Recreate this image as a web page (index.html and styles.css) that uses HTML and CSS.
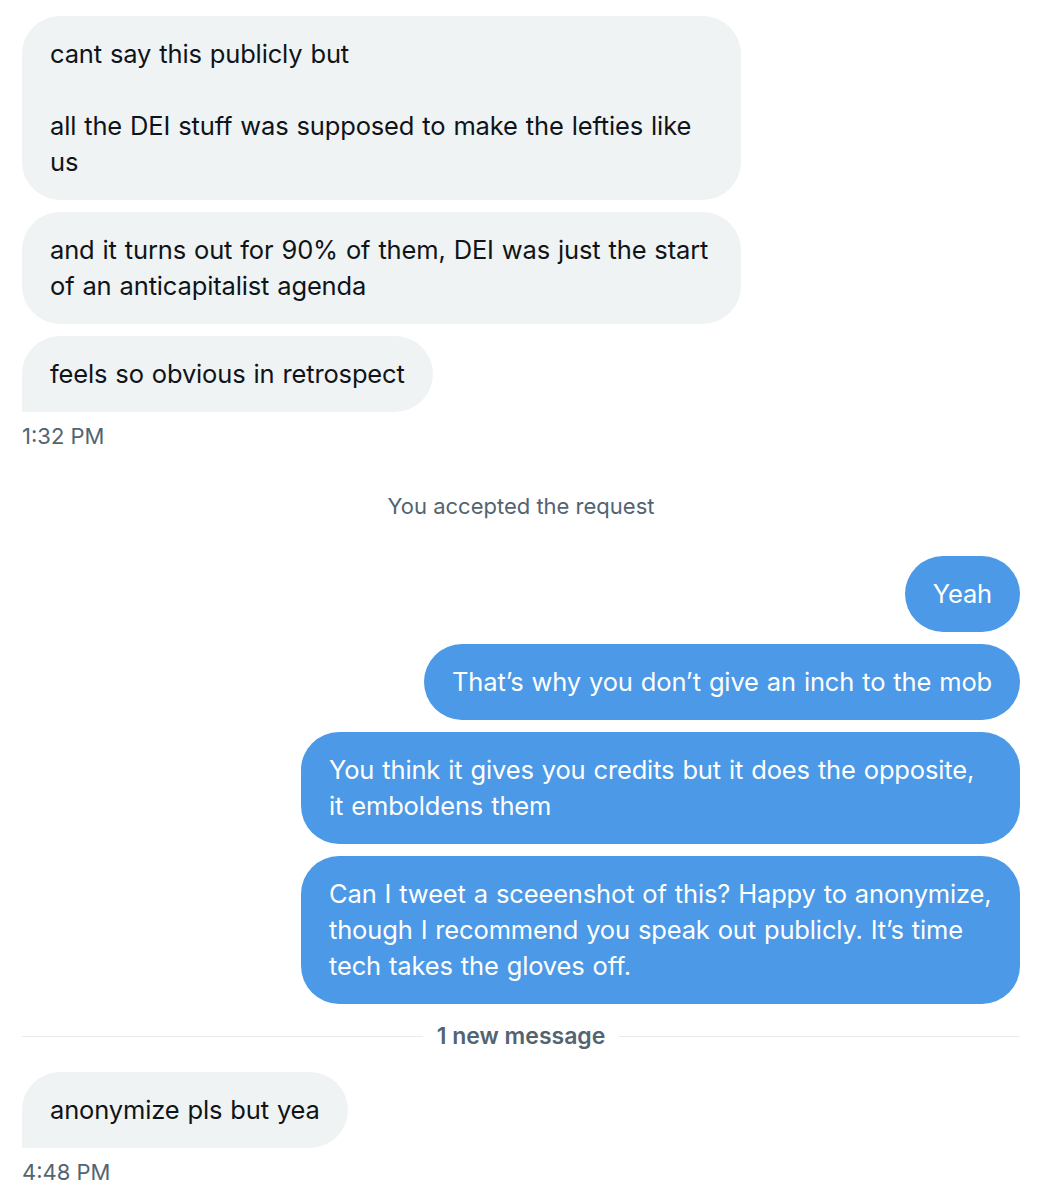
FILE: index.html
```html
<!DOCTYPE html>
<html lang="en">
<head>
	<meta charset="UTF-8">
	<title>Messages</title>
	<link rel="stylesheet" href="styles.css">
</head>
<body>
	<div class="thread">
		<div class="group in">
			<div class="bubble">cant say this publicly but<br><br>all the DEI stuff was supposed to make the lefties like us</div>
			<div class="bubble">and it turns out for 90% of them, DEI was just the start of an anticapitalist agenda</div>
			<div class="bubble last">feels so obvious in retrospect</div>
			<div class="time">1:32 PM</div>
		</div>
		<div class="notice">You accepted the request</div>
		<div class="group out">
			<div class="bubble">Yeah</div>
			<div class="bubble">That’s why you don’t give an inch to the mob</div>
			<div class="bubble">You think it gives you credits but it does the opposite, it emboldens them</div>
			<div class="bubble">Can I tweet a sceeenshot of this? Happy to anonymize, though I recommend you speak out publicly. It’s time tech takes the gloves off.</div>
		</div>
		<div class="divider"><span>1 new message</span></div>
		<div class="group in">
			<div class="bubble last">anonymize pls but yea</div>
			<div class="time">4:48 PM</div>
		</div>
	</div>
</body>
</html>
```

FILE: styles.css
```css
*{
	margin: 0;
	padding: 0;
	box-sizing: border-box;
}
body{
	background: #fff;
	font-family: Inter, "Noto Sans", sans-serif;
	color: #0f1419;
}
.thread{
	width: 1045px;
	padding: 16px 25px 0 22px;
	display: flex;
	flex-direction: column;
}
.group{
	display: flex;
	flex-direction: column;
	gap: 12px;
}
.group.in{
	align-items: flex-start;
}
.group.out{
	align-items: flex-end;
}
.bubble{
	max-width: 719px;
	padding: 20px 28px;
	border-radius: 38px;
	font-size: 25.5px;
	line-height: 36px;
	letter-spacing: -0.15px;
	word-spacing: 1px;
}
.in .bubble{
	background: #eff3f4;
	color: #0f1419;
}
.in .bubble.last{
	border-bottom-left-radius: 0;
}
.out .bubble{
	background: #4b99e7;
	color: #fff;
}
.time{
	font-size: 22px;
	line-height: 28px;
	color: #536471;
	margin-top: -2px;
}
.notice{
	text-align: center;
	font-size: 22px;
	line-height: 28px;
	color: #536471;
	margin: 42px 0 36px;
}
.divider{
	display: flex;
	align-items: center;
	gap: 14px;
	margin: 18px 0 22px;
	font-size: 23px;
	line-height: 28px;
	font-weight: 600;
	color: #536471;
}
.divider::before, .divider::after{
	content: "";
	flex: 1;
	height: 1px;
	background: #e7ebee;
}
```
